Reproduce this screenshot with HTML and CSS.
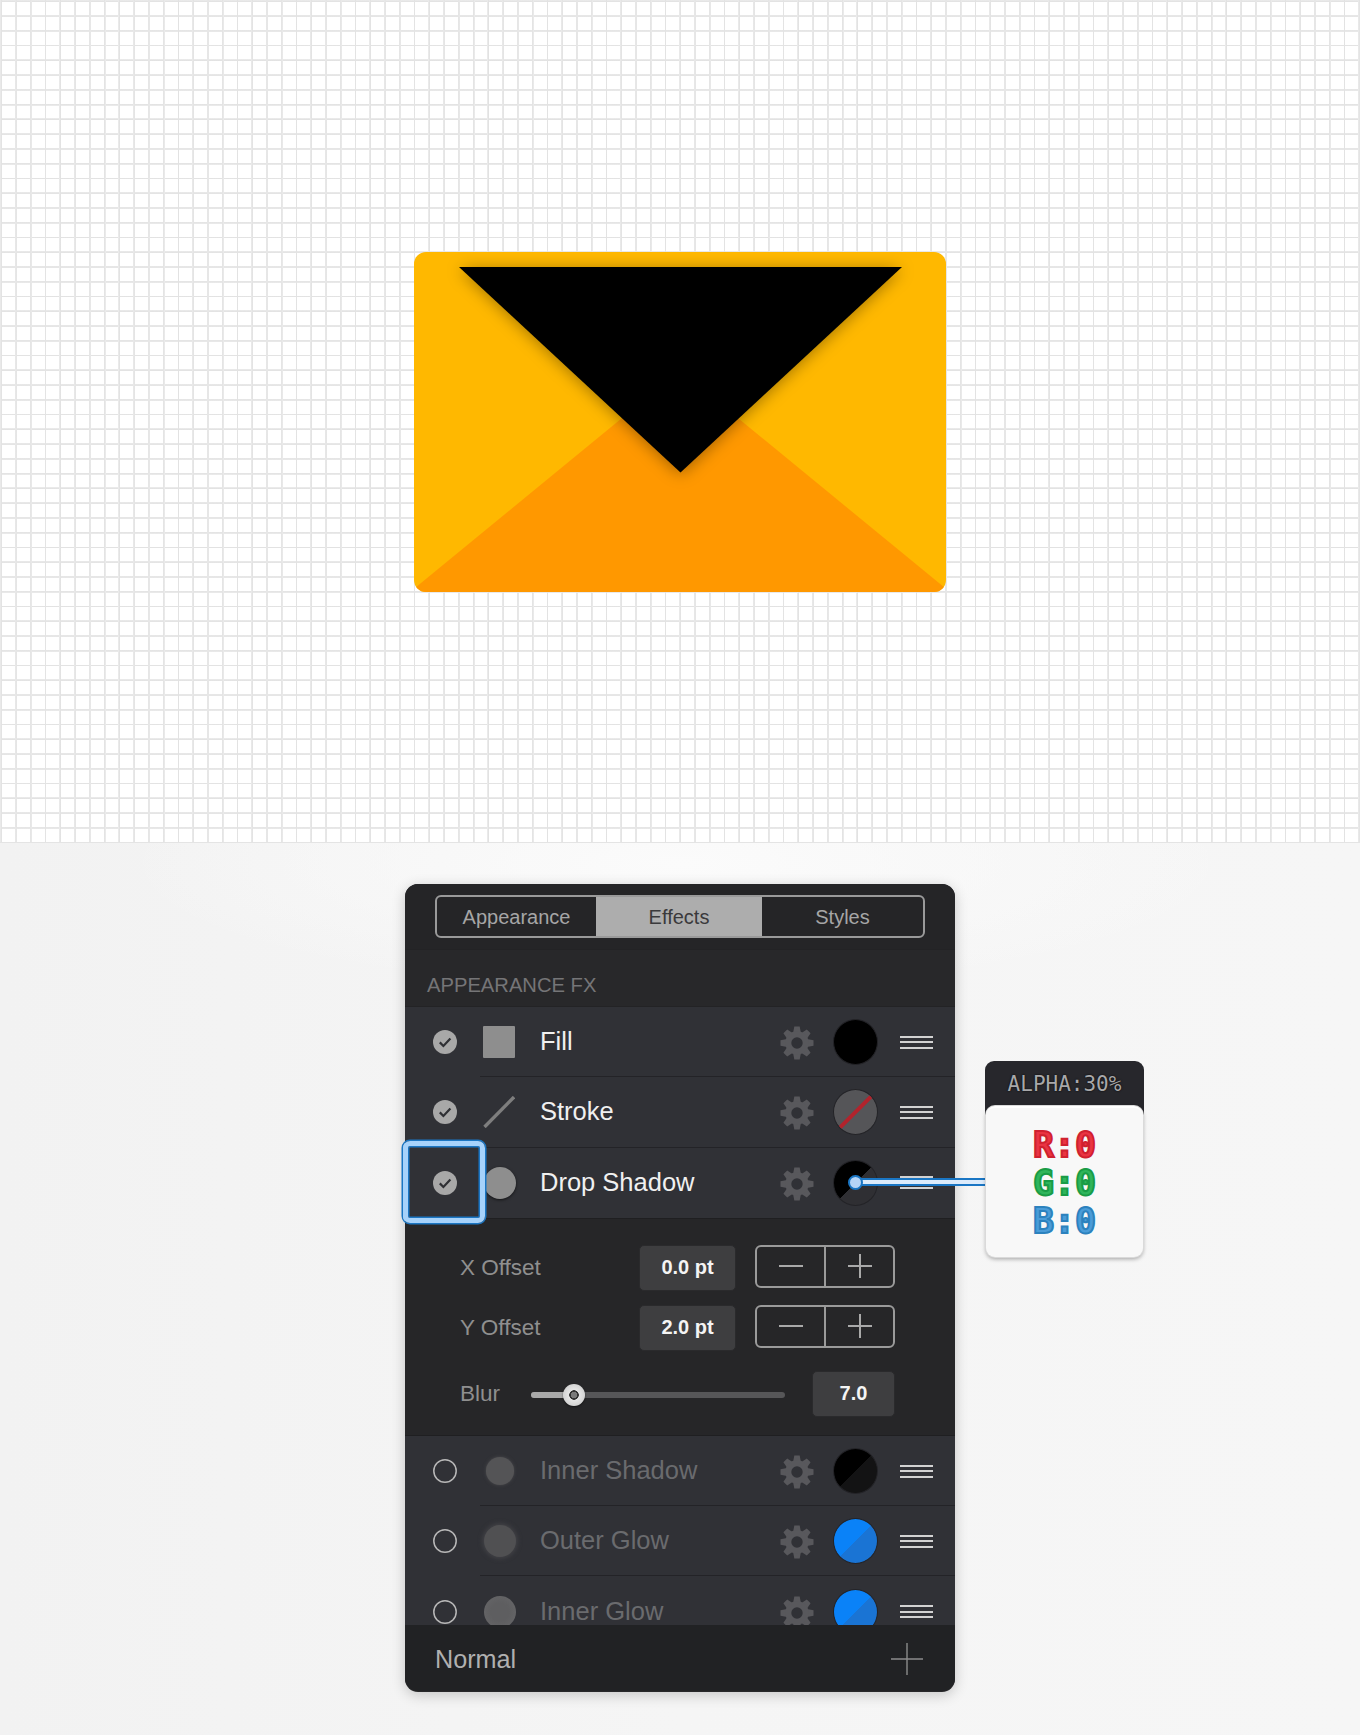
FILE: index.html
```html
<!DOCTYPE html>
<html lang="en">
<head>
<meta charset="utf-8">
<title>Appearance effects</title>
<link rel="stylesheet" href="styles.css">
</head>
<body>
<svg class="defs" width="0" height="0" aria-hidden="true">
  <symbol id="gear" viewBox="0 0 34 34">
    <g fill="currentColor">
      <path d="M14.3 .5h5.4l1.5 8h-8.4zM14.3 33.5h5.4l1.5-8h-8.4z"/>
      <path d="M14.3 .5h5.4l1.5 8h-8.4zM14.3 33.5h5.4l1.5-8h-8.4z" transform="rotate(45 17 17)"/>
      <path d="M14.3 .5h5.4l1.5 8h-8.4zM14.3 33.5h5.4l1.5-8h-8.4z" transform="rotate(90 17 17)"/>
      <path d="M14.3 .5h5.4l1.5 8h-8.4zM14.3 33.5h5.4l1.5-8h-8.4z" transform="rotate(135 17 17)"/>
    </g>
    <circle cx="17" cy="17" r="8.7" fill="none" stroke="currentColor" stroke-width="6"/>
  </symbol>
  <symbol id="check" viewBox="0 0 24 24">
    <circle cx="12" cy="12" r="12" fill="#a8a8a8"/>
    <path d="M6.8 12.4l3.6 3.6 7-7.4" fill="none" stroke="#2f3034" stroke-width="2.2"/>
  </symbol>
  <symbol id="minus" viewBox="0 0 24 24">
    <path d="M0 12H24" stroke="#a9a9a9" stroke-width="2"/>
  </symbol>
  <symbol id="plus" viewBox="0 0 24 24">
    <path d="M0 12H24M12 0V24" stroke="#a9a9a9" stroke-width="2"/>
  </symbol>
  <symbol id="ring" viewBox="0 0 24 24">
    <circle cx="12" cy="12" r="11.2" fill="none" stroke="#b8b8b8" stroke-width="1.5"/>
  </symbol>
</svg>

<section class="canvas">
  <svg class="envelope" width="532" height="340" viewBox="0 0 532 340">
    <defs>
      <clipPath id="env"><rect width="532" height="340" rx="12"/></clipPath>
      <filter id="flap" x="-20%" y="-20%" width="140%" height="140%">
        <feDropShadow dx="0" dy="2" stdDeviation="8" flood-color="#000" flood-opacity=".36"/>
      </filter>
    </defs>
    <g clip-path="url(#env)">
      <rect width="532" height="340" fill="#ffb800"/>
      <path d="M266 118.5 L542 345 L-10 345 Z" fill="#ff9800"/>
      <path d="M45 15 H488 L266.5 220.5 Z" fill="#000" filter="url(#flap)"/>
    </g>
  </svg>
</section>

<section class="stage">
  <div class="panel">
    <header class="tabs-bar">
      <div class="tabs">
        <div class="tab">Appearance</div>
        <div class="tab tab-on">Effects</div>
        <div class="tab">Styles</div>
      </div>
    </header>
    <div class="section-title">APPEARANCE FX</div>

    <div class="row">
      <svg class="mark"><use href="#check"/></svg>
      <span class="thumb thumb-square"></span>
      <span class="label">Fill</span>
      <svg class="gear"><use href="#gear"/></svg>
      <span class="swatch sw-black"></span>
      <span class="grip"><i></i><i></i><i></i></span>
    </div>
    <div class="row">
      <svg class="mark"><use href="#check"/></svg>
      <svg class="thumb" viewBox="0 0 32 32"><path d="M1.5 31 L31 1" stroke="#7e7e7e" stroke-width="3.4"/></svg>
      <span class="label">Stroke</span>
      <svg class="gear"><use href="#gear"/></svg>
      <span class="swatch sw-none"></span>
      <span class="grip"><i></i><i></i><i></i></span>
    </div>
    <div class="row">
      <svg class="mark"><use href="#check"/></svg>
      <span class="thumb thumb-round thumb-drop"></span>
      <span class="label">Drop Shadow</span>
      <svg class="gear"><use href="#gear"/></svg>
      <span class="swatch sw-alpha"></span>
      <span class="grip"><i></i><i></i><i></i></span>
    </div>

    <div class="detail">
      <div class="field">
        <span class="field-name">X Offset</span>
        <span class="value value-wide">0.0 pt</span>
        <div class="stepper">
          <span class="step"><svg class="step-icon"><use href="#minus"/></svg></span>
          <span class="step"><svg class="step-icon"><use href="#plus"/></svg></span>
        </div>
      </div>
      <div class="field">
        <span class="field-name">Y Offset</span>
        <span class="value value-wide">2.0 pt</span>
        <div class="stepper">
          <span class="step"><svg class="step-icon"><use href="#minus"/></svg></span>
          <span class="step"><svg class="step-icon"><use href="#plus"/></svg></span>
        </div>
      </div>
      <div class="field field-blur">
        <span class="blur-name">Blur</span>
        <div class="slider"><span class="slider-fill"></span><span class="knob"></span></div>
        <span class="value value-small">7.0</span>
      </div>
    </div>

    <div class="row row-off">
      <svg class="mark"><use href="#ring"/></svg>
      <span class="thumb thumb-round thumb-inner"></span>
      <span class="label">Inner Shadow</span>
      <svg class="gear"><use href="#gear"/></svg>
      <span class="swatch sw-black2"></span>
      <span class="grip"><i></i><i></i><i></i></span>
    </div>
    <div class="row row-off">
      <svg class="mark"><use href="#ring"/></svg>
      <span class="thumb thumb-round thumb-glow"></span>
      <span class="label">Outer Glow</span>
      <svg class="gear"><use href="#gear"/></svg>
      <span class="swatch sw-blue"></span>
      <span class="grip"><i></i><i></i><i></i></span>
    </div>
    <div class="row-clip">
      <div class="row row-off">
        <svg class="mark"><use href="#ring"/></svg>
        <span class="thumb thumb-round thumb-innerglow"></span>
        <span class="label">Inner Glow</span>
        <svg class="gear"><use href="#gear"/></svg>
        <span class="swatch sw-blue"></span>
        <span class="grip"><i></i><i></i><i></i></span>
      </div>
    </div>

    <footer class="foot">
      <span class="foot-name">Normal</span>
      <svg class="foot-add" width="32" height="32" viewBox="0 0 32 32"><path d="M0 16H32M16 0V32" stroke="#8c8c8c" stroke-width="1.4"/></svg>
    </footer>

    <div class="focus"></div>
    <div class="wire"><span class="wire-dot"></span></div>
    <aside class="note">
      <div class="note-head">ALPHA:30%</div>
      <div class="note-body">
        <div class="rgb rgb-r">R:0</div>
        <div class="rgb rgb-g">G:0</div>
        <div class="rgb rgb-b">B:0</div>
      </div>
    </aside>
  </div>
</section>
</body>
</html>
```

FILE: styles.css
```css
* { box-sizing: border-box; }
html, body { margin: 0; padding: 0; }
body {
  width: 1360px;
  height: 1735px;
  overflow: hidden;
  background: #f5f5f5;
  font-family: "Liberation Sans", Arial, sans-serif;
}
.defs { display: block; height: 0; }

.canvas {
  height: 843px;
  padding-top: 252px;
  display: flex;
  justify-content: center;
  align-items: flex-start;
  background-color: #fff;
  background-image:
    repeating-linear-gradient(to right, transparent 0, transparent .4px, #eaeaea .4px, #e2e2e2 1.4px, #eaeaea 2.2px, transparent 2.2px, transparent 14.76px),
    repeating-linear-gradient(to bottom, transparent 0, transparent .4px, #eaeaea .4px, #e2e2e2 1.4px, #eaeaea 2.2px, transparent 2.2px, transparent 14.76px);
  border-bottom: 1px solid #e4e4e4;
}
.envelope { display: block; }

.stage {
  height: 892px;
  padding-top: 41px;
  background:
    radial-gradient(ellipse 560px 130px at 680px 20px, #fbfbfb 0, rgba(251,251,251,0) 100%),
    linear-gradient(to right, #f2f2f2 0, #f5f5f5 50%, #f6f6f6 100%);
}
.panel {
  position: relative;
  width: 550px;
  height: 808px;
  margin-left: 405px;
  border-radius: 13px;
  background: #28282a;
  box-shadow: 0 3px 14px rgba(0,0,0,.2);
}

.tabs-bar {
  height: 66px;
  padding: 11px 30px 0;
  background: #252527;
  border-radius: 13px 13px 0 0;
  border-bottom: 1px solid #232325;
}
.tabs {
  display: grid;
  grid-template-columns: 159px 166px 1fr;
  height: 43px;
  border: 2px solid #9a9a9a;
  border-radius: 6px;
  overflow: hidden;
}
.tab {
  display: flex;
  align-items: center;
  justify-content: center;
  padding-top: 1px;
  font-size: 20px;
  color: #a6a6a6;
}
.tab-on { background: #adadad; color: #3a3a3c; }

.section-title {
  height: 57px;
  padding: 23px 0 0 22px;
  font-size: 20.2px;
  line-height: 24px;
  color: #757577;
  border-bottom: 1px solid #232325;
}

.row {
  display: flex;
  align-items: center;
  position: relative;
  height: 70.3px;
  background: #303136;
  flex: none;
}
.row + .row::before,
.row-clip .row::before {
  content: "";
  position: absolute;
  left: 75px;
  right: 0;
  top: -1px;
  height: 1px;
  background: #232327;
}
.row-clip {
  height: 50px;
  overflow: hidden;
  padding-top: 1px;
  margin-top: -1px;
}
.mark {
  flex: none;
  width: 24px;
  height: 24px;
  margin-left: 28px;
}
.thumb {
  flex: none;
  width: 32px;
  height: 32px;
  margin-left: 26px;
  margin-right: 0;
}
.thumb-square { background: #8e8e8e; border-radius: 1px; }
.thumb-round {
  margin-left: 27px;
  margin-right: -1px;
  border-radius: 50%;
  background: #8e8e8e;
}
.thumb-drop { box-shadow: 0 1px 3px rgba(0,0,0,.6); }
.thumb-inner { background: #545456; box-shadow: 0 0 4px #4a4a4d; transform: scale(.88); }
.thumb-glow { background: #505052; box-shadow: 0 0 5px 1px #46464a; }
.thumb-innerglow { background: radial-gradient(circle, #5e5e60 40%, #68686a 100%); }

.label {
  flex: none;
  width: 240px;
  margin-left: 25px;
  margin-top: -2px;
  font-size: 25.5px;
  line-height: 30px;
  color: #f0f0f0;
}
.row-off .label { color: #6a6b6e; }
.gear {
  flex: none;
  width: 34px;
  height: 34px;
  margin-top: 2px;
  color: #58585c;
}
.swatch {
  flex: none;
  position: relative;
  width: 45px;
  height: 46px;
  margin-left: 19px;
  border-radius: 50%;
  border: 1px solid #232327;
  overflow: hidden;
}
.sw-black { background: #000; }
.sw-none { background: #555558; }
.sw-none::after {
  content: "";
  position: absolute;
  left: -4px; right: -4px;
  top: 50%;
  height: 3.5px;
  margin-top: -2px;
  background: #b2232c;
  transform: rotate(-45deg);
}
.sw-alpha { background: linear-gradient(135deg, #000 50%, #2f2f33 50%); }
.sw-black2 { background: linear-gradient(135deg, #000 50%, #131314 50%); }
.sw-blue { background: linear-gradient(135deg, #0a82f8 50%, #1a74d4 50%); }
.grip {
  flex: none;
  display: flex;
  flex-direction: column;
  gap: 3.5px;
  width: 33px;
  margin-left: 22px;
}
.grip i {
  display: block;
  height: 2px;
  background: #d2d2d2;
}

.detail {
  height: 218px;
  padding: 26px 60px 0 55px;
  background: #262628;
  border-top: 1px solid #1f1f21;
  border-bottom: 1px solid #1f1f21;
}
.field {
  display: flex;
  align-items: center;
  height: 46px;
  margin-bottom: 14px;
}
.field-name {
  flex: none;
  width: 179px;
  font-size: 22.5px;
  color: #8f8f8f;
}
.value {
  flex: none;
  display: flex;
  align-items: center;
  justify-content: center;
  height: 46px;
  border-radius: 5px;
  background: #3e3e40;
  border: 1px solid #2a2a2c;
  color: #f4f4f4;
  font-size: 20px;
  font-weight: 700;
}
.value-wide { width: 97px; }
.value-small { width: 83px; margin-left: 27px; }
.stepper {
  flex: none;
  display: flex;
  width: 140px;
  height: 43px;
  margin-left: 19px;
  margin-top: -3px;
  border: 2px solid #9a9a9a;
  border-radius: 6px;
}
.step {
  flex: 1;
  display: flex;
  align-items: center;
  justify-content: center;
}
.step + .step { border-left: 2px solid #9a9a9a; }
.step-icon { width: 24px; height: 24px; display: block; }
.field-blur { margin-top: 20px; margin-bottom: 0; }
.blur-name {
  flex: none;
  width: 71px;
  font-size: 22.5px;
  color: #8f8f8f;
}
.slider {
  position: relative;
  flex: none;
  width: 254px;
  height: 6px;
  margin-top: 3px;
  border-radius: 3px;
  background: #565658;
}
.slider-fill {
  display: block;
  width: 44px;
  height: 6px;
  border-radius: 3px 0 0 3px;
  background: #a9a9a9;
}
.knob {
  position: absolute;
  left: 32px;
  top: -8px;
  width: 22px;
  height: 22px;
  border-radius: 50%;
  background: radial-gradient(circle, #7a7a7a 0, #7a7a7a 3px, #333 3.5px, #333 4.5px, #e6e6e6 5px, #c4c4c4 100%);
  box-shadow: 0 1px 2px rgba(0,0,0,.5);
}

.foot {
  display: flex;
  align-items: center;
  justify-content: space-between;
  height: 66px;
  padding: 2px 32px 0 30px;
  background: #212224;
  border-radius: 0 0 13px 13px;
}
.foot-name {
  font-size: 25.2px;
  color: #b0b0b0;
}

.focus {
  position: absolute;
  left: -2px;
  top: 257px;
  width: 82px;
  height: 82px;
  border-radius: 7px;
  border: 5px solid #a6d2fb;
  box-shadow: 0 0 0 1.5px #1a76c4, inset 0 0 0 1.5px #1a76c4;
}
.wire {
  position: absolute;
  left: 450px;
  top: 294px;
  width: 130px;
  height: 8px;
  background: #dcebfb;
  border-top: 2px solid #1a76c4;
  border-bottom: 2px solid #1a76c4;
}
.wire-dot {
  position: absolute;
  left: -7px;
  top: -5.5px;
  width: 15px;
  height: 15px;
  border-radius: 50%;
  background: #b6d4f6;
  border: 2px solid #1a76c4;
}
.note {
  position: absolute;
  left: 580px;
  top: 177px;
  width: 159px;
}
.note-head {
  height: 56px;
  text-align: center;
  padding-top: 11px;
  border-radius: 9px 9px 0 0;
  background: #27272c;
  font-family: "DejaVu Sans Mono", monospace;
  font-size: 21px;
  line-height: 25px;
  color: #a8a8aa;
  text-shadow: 0 0 2px #000;
}
.note-body {
  position: relative;
  margin: -11px 1px 0;
  height: 151px;
  padding-top: 18px;
  border-radius: 9px;
  background: #f8f8f8;
  border-top: 2px solid #fff;
  box-shadow: 0 0 0 1px #dadada, 0 2px 4px rgba(0,0,0,.35);
}
.rgb {
  height: 38px;
  text-align: center;
  font-family: "DejaVu Sans Mono", monospace;
  font-weight: 700;
  font-size: 35px;
  line-height: 38px;
  -webkit-text-stroke: 2px var(--edge);
  text-shadow: 0 1px 0 rgba(0,0,0,.12);
}
.rgb-r { color: #ea3442; --edge: #d0212f; }
.rgb-g { color: #2fb55b; --edge: #199c46; }
.rgb-b { color: #4a9cd8; --edge: #2c82be; }
```
